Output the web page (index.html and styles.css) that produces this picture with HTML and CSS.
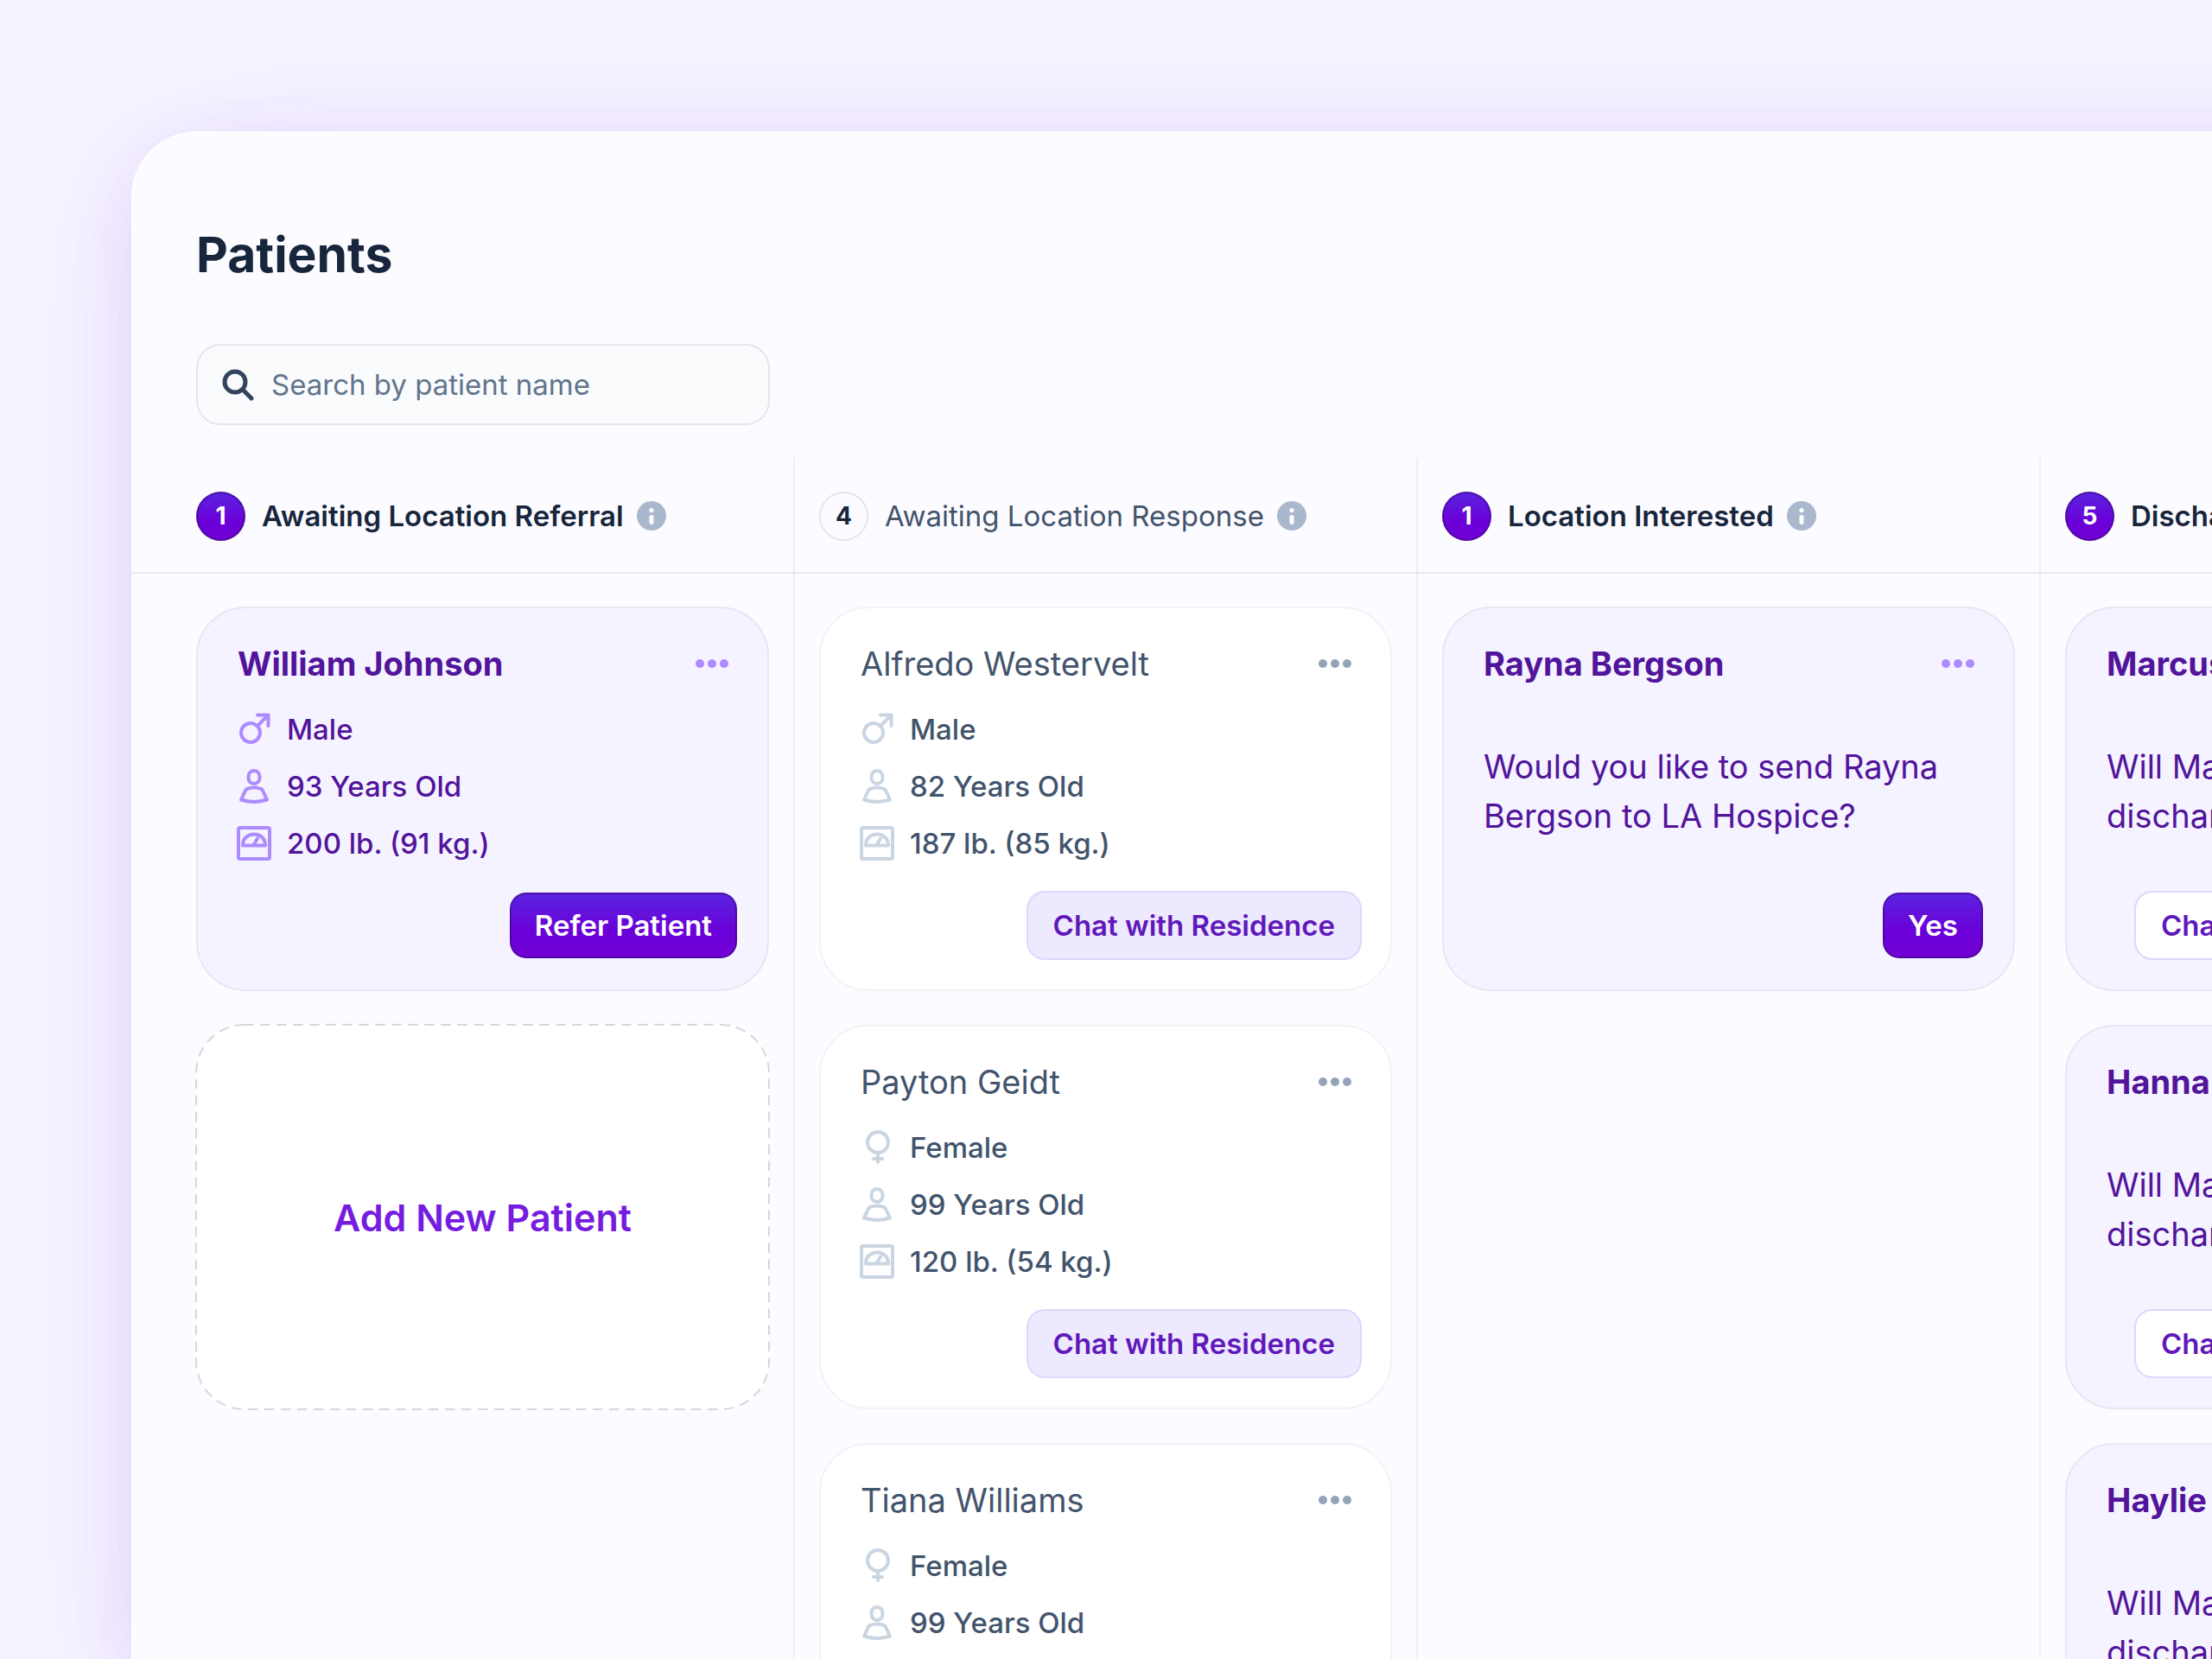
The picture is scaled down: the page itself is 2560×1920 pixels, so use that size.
FILE: index.html
```
<!DOCTYPE html>
<html lang="en">

<head>
    <meta charset="UTF-8">
    <meta name="viewport" content="width=device-width, initial-scale=1.0">
    <title>Patients</title>
    <link rel="stylesheet" href="styles.css">
</head>

<body>

    <!-- Shared icons -->
    <svg class="sprite" aria-hidden="true">
        <symbol id="icon-male" viewBox="0 0 40 40">
            <circle cx="16" cy="24" r="11" />
            <path d="M24 16L36 4M24 3.5H36.5V16" />
        </symbol>
        <symbol id="icon-female" viewBox="0 0 40 40">
            <circle cx="21" cy="14" r="12" />
            <path d="M21 26V37M16 33H26" />
        </symbol>
        <symbol id="icon-age" viewBox="0 0 40 40">
            <rect x="13.500" y="2" width="13" height="15" rx="6.500" />
            <path d="M12 23Q20 20 28 23Q29.500 23.500 30 25L35 35.500Q27 38 20 38T5 35.500L10 25Q10.500 23.500 12 23Z" />
        </symbol>
        <symbol id="icon-weight" viewBox="0 0 40 40">
            <rect x="2" y="2" width="36" height="36" rx="2" />
            <path d="M7 22.500C7 14 13 9.500 20 9.500S33 14 33 22.500ZM19.500 22L24 14.500" />
        </symbol>
        <symbol id="icon-info" viewBox="0 0 34 34">
            <circle cx="17" cy="17" r="17" fill="#aab8cd" />
            <circle cx="17" cy="10.500" r="2.600" fill="#fff" />
            <rect x="14.500" y="16" width="5" height="11" rx="2.500" fill="#fff" />
        </symbol>
        <symbol id="icon-more" viewBox="0 0 38 10">
            <circle cx="5" cy="5" r="5" />
            <circle cx="19" cy="5" r="5" />
            <circle cx="33" cy="5" r="5" />
        </symbol>
    </svg>

    <main class="panel">

        <header class="top">
            <h1>Patients</h1>
            <label class="search">
                <svg class="search-icon" viewBox="0 0 38 38" aria-hidden="true">
                    <circle cx="16" cy="16" r="12" />
                    <path d="M25 25L35 35" />
                </svg>
                <input type="search" placeholder="Search by patient name" aria-label="Search by patient name">
            </label>
        </header>

        <div class="board">

            <section class="column">
                <div class="column-head active">
                    <span class="count">1</span>
                    <h2>Awaiting Location Referral</h2>
                    <svg class="info"><use href="#icon-info" /></svg>
                </div>
                <div class="cards">
                    <article class="card active">
                        <div class="card-head">
                            <h3>William Johnson</h3>
                            <button class="more" aria-label="More"><svg><use href="#icon-more" /></svg></button>
                        </div>
                        <ul class="facts">
                            <li><svg><use href="#icon-male" /></svg>Male</li>
                            <li><svg><use href="#icon-age" /></svg>93 Years Old</li>
                            <li><svg><use href="#icon-weight" /></svg>200 lb. (91 kg.)</li>
                        </ul>
                        <div class="actions">
                            <button class="btn primary">Refer Patient</button>
                        </div>
                    </article>
                    <button class="add">
                        <svg class="add-outline" aria-hidden="true"><rect x="1" y="1" rx="56" /></svg>
                        Add New Patient
                    </button>
                </div>
            </section>

            <section class="column">
                <div class="column-head">
                    <span class="count">4</span>
                    <h2>Awaiting Location Response</h2>
                    <svg class="info"><use href="#icon-info" /></svg>
                </div>
                <div class="cards">
                    <article class="card">
                        <div class="card-head">
                            <h3>Alfredo Westervelt</h3>
                            <button class="more" aria-label="More"><svg><use href="#icon-more" /></svg></button>
                        </div>
                        <ul class="facts">
                            <li><svg><use href="#icon-male" /></svg>Male</li>
                            <li><svg><use href="#icon-age" /></svg>82 Years Old</li>
                            <li><svg><use href="#icon-weight" /></svg>187 lb. (85 kg.)</li>
                        </ul>
                        <div class="actions">
                            <button class="btn soft">Chat with Residence</button>
                        </div>
                    </article>
                    <article class="card">
                        <div class="card-head">
                            <h3>Payton Geidt</h3>
                            <button class="more" aria-label="More"><svg><use href="#icon-more" /></svg></button>
                        </div>
                        <ul class="facts">
                            <li><svg><use href="#icon-female" /></svg>Female</li>
                            <li><svg><use href="#icon-age" /></svg>99 Years Old</li>
                            <li><svg><use href="#icon-weight" /></svg>120 lb. (54 kg.)</li>
                        </ul>
                        <div class="actions">
                            <button class="btn soft">Chat with Residence</button>
                        </div>
                    </article>
                    <article class="card">
                        <div class="card-head">
                            <h3>Tiana Williams</h3>
                            <button class="more" aria-label="More"><svg><use href="#icon-more" /></svg></button>
                        </div>
                        <ul class="facts">
                            <li><svg><use href="#icon-female" /></svg>Female</li>
                            <li><svg><use href="#icon-age" /></svg>99 Years Old</li>
                        </ul>
                    </article>
                </div>
            </section>

            <section class="column">
                <div class="column-head active">
                    <span class="count">1</span>
                    <h2>Location Interested</h2>
                    <svg class="info"><use href="#icon-info" /></svg>
                </div>
                <div class="cards">
                    <article class="card active">
                        <div class="card-head">
                            <h3>Rayna Bergson</h3>
                            <button class="more" aria-label="More"><svg><use href="#icon-more" /></svg></button>
                        </div>
                        <p class="question">Would you like to send Rayna Bergson to LA Hospice?</p>
                        <div class="actions">
                            <button class="btn primary">Yes</button>
                        </div>
                    </article>
                </div>
            </section>

            <section class="column">
                <div class="column-head active">
                    <span class="count">5</span>
                    <h2>Discharge</h2>
                </div>
                <div class="cards">
                    <article class="card active">
                        <div class="card-head">
                            <h3>Marcus</h3>
                        </div>
                        <p class="question">Will Marcus be<br>discharged?</p>
                        <div class="actions start">
                            <button class="btn plain">Chat</button>
                        </div>
                    </article>
                    <article class="card active">
                        <div class="card-head">
                            <h3>Hanna</h3>
                        </div>
                        <p class="question">Will Marcus be<br>discharged?</p>
                        <div class="actions start">
                            <button class="btn plain">Chat</button>
                        </div>
                    </article>
                    <article class="card active">
                        <div class="card-head">
                            <h3>Haylie</h3>
                        </div>
                        <p class="question">Will Marcus be<br>discharged?</p>
                    </article>
                </div>
            </section>

        </div>
    </main>

</body>

</html>
```

FILE: styles.css
```
* {
    margin: 0;
    padding: 0;
    box-sizing: border-box;
}

body {
    font-family: Inter, "Liberation Sans", sans-serif;
    background-color: #f5f3ff;
    color: #42546c;
    font-size: 33px;
    line-height: 48px;
    height: 100vh;
    overflow: hidden;
    display: flex;
    padding: 152px 0 0 152px;
}

button,
input {
    font: inherit;
    border: none;
    background: none;
}

.sprite {
    display: none;
}

.panel {
    flex: 1;
    min-width: 0;
    display: flex;
    flex-direction: column;
    background-color: #fcfbff;
    border-top-left-radius: 76px;
    box-shadow: inset 1px 1px 0 #fff, 60px 28px 150px rgba(100, 60, 255, 0.05), 0 28px 150px 8px rgba(120, 60, 255, 0.06), 0 28px 90px 4px rgba(180, 0, 240, 0.09);
    margin-right: -200px;
}

.top {
    padding: 105px 75px 38px;
}

h1 {
    font-size: 57px;
    line-height: 76px;
    font-weight: 700;
    color: #17263c;
    margin-bottom: 65px;
}

.search {
    display: flex;
    align-items: center;
    gap: 20px;
    width: 664px;
    height: 94px;
    padding: 0 27px;
    background-color: #f9fbfc;
    border: 2px solid #e5e5ea;
    border-radius: 28px;
}

.search-icon {
    width: 38px;
    height: 38px;
    fill: none;
    stroke: #33445c;
    stroke-width: 5;
    stroke-linecap: round;
}

.search input {
    flex: 1;
    min-width: 0;
    outline: none;
}

.search input::placeholder {
    color: #62748d;
    opacity: 1;
}

/* Board */

.board {
    flex: 1;
    display: flex;
}

.column {
    flex: none;
    border-right: 2px solid rgba(23, 23, 60, 0.05);
}

.column-head {
    display: flex;
    align-items: center;
    height: 134px;
    padding: 2px 28px 0;
    border-bottom: 2px solid rgba(23, 23, 60, 0.08);
    margin-right: -2px;
}

.cards {
    display: flex;
    flex-direction: column;
    gap: 39px;
    width: 719px;
    padding: 38px 28px;
}

.column:first-child .column-head {
    padding-left: 75px;
}

.column:first-child .cards {
    width: 766px;
    padding-left: 75px;
}

.count {
    width: 57px;
    height: 57px;
    border: 2px solid #e7e6ed;
    border-radius: 50%;
    display: flex;
    align-items: center;
    justify-content: center;
    font-size: 28px;
    font-weight: 700;
    color: #17263c;
    margin-right: 19px;
}

h2 {
    font-size: 33px;
    font-weight: 400;
}

.info {
    width: 34px;
    height: 34px;
    margin-left: 15px;
}

.column-head.active h2 {
    font-weight: 600;
    color: #17263c;
}

.column-head.active .count,
.btn.primary {
    color: #fff;
    background: linear-gradient(#5b24e0, #6a00d8 60%, #7200d4) border-box;
    border: 2px solid rgba(60, 10, 130, 0.6);
}

/* Cards */

.card {
    display: flex;
    flex-direction: column;
    height: 445px;
    padding: 40px 35px 36px 46px;
    background-color: #fff;
    border: 2px solid #f2f1f6;
    border-radius: 57px;
}

.card.active {
    background-color: #f5f3ff;
    border-color: #e8e6f5;
    color: #51149b;
}

.card-head {
    display: flex;
    align-items: center;
    justify-content: space-between;
    padding-right: 10px;
}

h3 {
    font-size: 38px;
    font-weight: 400;
}

.card.active h3 {
    font-weight: 700;
}

.more svg {
    display: block;
    width: 38px;
    height: 10px;
    fill: #94a3b8;
}

.card.active .more svg {
    fill: #ac8bff;
}

.facts {
    list-style: none;
    margin-top: 19px;
    font-weight: 500;
}

.facts li {
    display: flex;
    align-items: center;
    gap: 18px;
    height: 66px;
    margin-left: -1px;
}

.facts svg {
    width: 40px;
    height: 40px;
    fill: none;
    stroke: #cad5e2;
    stroke-width: 4;
    stroke-linecap: round;
    stroke-linejoin: round;
}

.card.active .facts svg {
    stroke: #ac8bff;
}

.question {
    font-size: 38px;
    line-height: 57px;
    margin-top: 67px;
}

.actions {
    display: flex;
    justify-content: flex-end;
    margin-top: auto;
}

.actions.start {
    justify-content: flex-start;
    margin-left: 34px;
}

.btn {
    height: 76px;
    padding: 0 29px;
    border-radius: 19px;
    font-weight: 600;
    color: #6018bb;
}

.btn.primary {
    padding: 0 27px;
}

.btn.soft {
    background-color: #ede9fe;
    box-shadow: 0 0 0 2px #ddd6fe;
}

.btn.plain {
    background-color: #fff;
    box-shadow: 0 0 0 2px #ddd6fe;
}

.add {
    position: relative;
    height: 447px;
    margin: -1px;
    background-color: #fff;
    border-radius: 57px;
    font-size: 43px;
    font-weight: 600;
    color: #761ce0;
}

.add-outline {
    position: absolute;
    inset: 0;
    width: 100%;
    height: 100%;
}

.add-outline rect {
    width: calc(100% - 2px);
    height: calc(100% - 2px);
    fill: none;
    stroke: #d7d6df;
    stroke-width: 2;
    stroke-dasharray: 10 9;
    stroke-linecap: round;
}
```
